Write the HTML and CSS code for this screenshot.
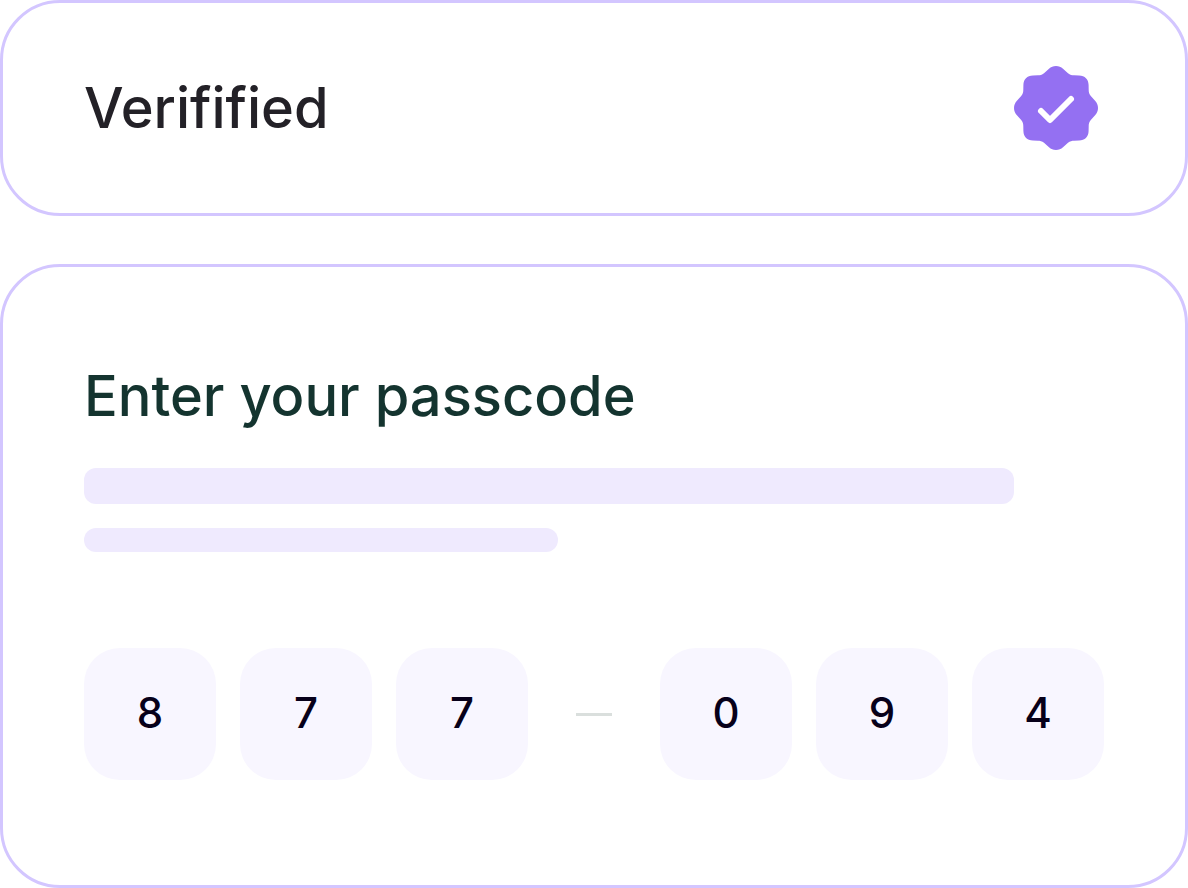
FILE: index.html
```html
<!DOCTYPE html>
<html lang="en">
<head>
<meta charset="utf-8">
<meta name="viewport" content="width=device-width, initial-scale=1">
<title>Enter your passcode</title>
<link rel="stylesheet" href="styles.css">
</head>
<body>
<main class="page">
  <section class="card status">
    <h2 class="title status-title">Verifified</h2>
    <svg class="badge" viewBox="0 0 84 84" aria-hidden="true">
      <path class="badge-shape" d="M42 0C44.800 0 47 1 49 2.700L54 7.200C56 8.900 58 9.300 60 9.300L65 9.400C71 9.600 74.400 13 74.600 19L74.700 24C74.700 26 75.100 28 76.800 30L81.300 35C83 37 84 39.200 84 42C84 44.800 83 47 81.300 49L76.800 54C75.100 56 74.700 58 74.700 60L74.600 65C74.400 71 71 74.400 65 74.600L60 74.700C58 74.700 56 75.100 54 76.800L49 81.300C47 83 44.800 84 42 84C39.200 84 37 83 35 81.300L30 76.800C28 75.100 26 74.700 24 74.700L19 74.600C13 74.400 9.600 71 9.400 65L9.300 60C9.300 58 8.900 56 7.200 54L2.700 49C1 47 0 44.800 0 42C0 39.200 1 37 2.700 35L7.200 30C8.900 28 9.300 26 9.300 24L9.400 19C9.600 13 13 9.600 19 9.400L24 9.300C26 9.300 28 8.900 30 7.200L35 2.700C37 1 39.200 0 42 0Z"/>
      <path class="badge-check" d="M27 45L36 54L57 33"/>
    </svg>
  </section>

  <form class="card passcode">
    <h1 class="title passcode-title" id="passcode-title">Enter your passcode</h1>
    <div class="placeholder">
      <div class="bar bar-long"></div>
      <div class="bar bar-short"></div>
    </div>
    <div class="code" role="group" aria-labelledby="passcode-title">
      <div class="digits">
        <input class="digit" type="text" inputmode="numeric" maxlength="1" aria-label="Digit 1" value="8">
        <input class="digit" type="text" inputmode="numeric" maxlength="1" aria-label="Digit 2" value="7">
        <input class="digit" type="text" inputmode="numeric" maxlength="1" aria-label="Digit 3" value="7">
      </div>
      <span class="dash"></span>
      <div class="digits">
        <input class="digit" type="text" inputmode="numeric" maxlength="1" aria-label="Digit 4" value="0">
        <input class="digit" type="text" inputmode="numeric" maxlength="1" aria-label="Digit 5" value="9">
        <input class="digit" type="text" inputmode="numeric" maxlength="1" aria-label="Digit 6" value="4">
      </div>
    </div>
  </form>
</main>
</body>
</html>
```
FILE: styles.css
```css
*,
*::before,
*::after {
  box-sizing: border-box;
}

body {
  margin: 0;
  background: #ffffff;
  font-family: Inter, "Liberation Sans", sans-serif;
}

.page {
  display: flex;
  flex-direction: column;
  gap: 48px;
}

.card {
  border: 3px solid #d3c6ff;
  border-radius: 60px;
  background: #ffffff;
}

.title {
  margin: 0;
  font-size: 56px;
  font-weight: 500;
  line-height: 72px;
}

.status {
  display: flex;
  align-items: center;
  justify-content: space-between;
  padding: 63px 87px 63px 81px;
}

.status-title {
  color: #232127;
}

.badge {
  width: 84px;
  height: 84px;
  flex: none;
}

.badge-shape {
  fill: #9470f2;
}

.badge-check {
  fill: none;
  stroke: #ffffff;
  stroke-width: 6;
  stroke-linecap: round;
  stroke-linejoin: round;
}

.passcode {
  padding: 93px 81px 105px;
}

.passcode-title {
  color: #14342f;
}

.placeholder {
  display: flex;
  flex-direction: column;
  gap: 24px;
  margin: 36px 0 96px;
}

.bar {
  max-width: 100%;
  border-radius: 12px;
  background: #efeafe;
}

.bar-long {
  width: 930px;
  height: 36px;
}

.bar-short {
  width: 474px;
  height: 24px;
}

.code {
  display: flex;
  align-items: center;
  gap: 48px;
}

.digits {
  display: flex;
  flex: 1;
  gap: 24px;
  min-width: 0;
}

.digit {
  flex: 1;
  min-width: 0;
  width: 0;
  aspect-ratio: 1;
  padding: 0 0 4px;
  border: 0;
  border-radius: 36px;
  background: #f8f6ff;
  color: #07001a;
  font-family: inherit;
  font-size: 42px;
  font-weight: 500;
  text-align: center;
}

.dash {
  flex: none;
  width: 36px;
  height: 3px;
  background: #dadfdd;
}
```
